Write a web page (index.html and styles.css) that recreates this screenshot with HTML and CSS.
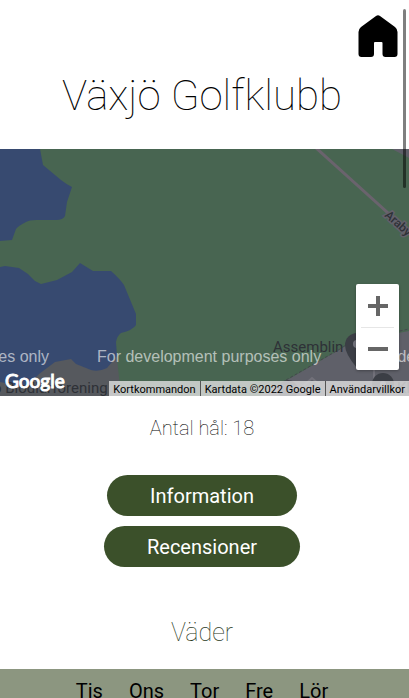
FILE: index.html
```html
<!DOCTYPE html>
<html lang="sv">
<head>
<meta charset="utf-8">
<meta name="viewport" content="width=device-width, initial-scale=1">
<title>Växjö Golfklubb</title>
<link rel="stylesheet" href="styles.css">
</head>
<body>
<div class="scroll-thumb" aria-hidden="true"></div>
<header class="top">
  <a class="home" href="#" aria-label="Hem">
    <svg viewBox="0 0 40 42" width="40" height="42" aria-hidden="true">
      <path d="M18 1Q20-.4 22 1L37 12Q39.500 14 39.500 17V39Q39.500 42 36.500 42H27.500Q24.500 42 24.500 39V28Q24.500 27 23.500 27H17Q16 27 16 28V39Q16 42 13 42H3.500Q.5 42 .5 39V17Q.5 14 3 12Z"/>
    </svg>
  </a>
</header>
<main>
  <h1 class="club">Växjö Golfklubb</h1>
  <section class="map" aria-label="Karta">
    <svg class="map-art" viewBox="0 0 409 247" preserveAspectRatio="xMidYMid slice">
      <rect width="409" height="247" fill="#486551"/>
      <path fill="#56595e" d="M0 200H116L121 247H0Z"/>
      <path fill="#374a70" d="M0 0H40L43 16L61 31Q66 35 72 38L67 53L65 67Q63 71 56 71H36Q29 71 26 73Q18 77 16 80L12 91L0 92Z"/>
      <path fill="#374a70" d="M0 118L5 117L19 119L28 125L35 132L41 135L57 131L72 123L80 114L93 122L111 122Q120 130 124 136L136 165V176Q133 181 121 184Q117 187 116 193L117 207L107 219Q99 223 91 221L76 215L71 210L55 213L39 225L27 238L0 233Z"/>
      <path fill="#5f6069" d="M260 247L344 198Q353 192 362 191L409 182V247Z"/>
      <path fill="none" stroke="#45484e" stroke-dasharray="3 2" d="M286 231L340 200Q352 191 364 190L409 180"/>
      <path fill="none" stroke="#72717a" stroke-width="2" d="M302 238L312 229L320 236M374 235V205"/>
      <path fill="none" stroke="#6a636d" stroke-width="3" d="M315-2L409 83"/>
      <path fill="#5e5e68" d="M392 0H409V9Z"/>
      <g fill="#3b3e45">
        <path d="M345 196A12 12 0 0 1 369 196Q369 204 357 219Q345 205 345 196Z"/>
        <circle cx="383" cy="235" r="11"/><circle cx="288" cy="241" r="10"/>
      </g>
      <circle cx="357" cy="195" r="4" fill="#74757e"/><circle cx="383" cy="235" r="3" fill="#74757e"/>
      <g class="places">
        <text x="273" y="203">Assemblin</text>
        <text x="-7" y="244">o Biodlarförening</text>
        <text x="397" y="244">Kl</text>
        <text class="road" transform="translate(384 67) rotate(42)">Araby sp</text>
      </g>
      <g class="watermark">
        <text x="49" y="213" text-anchor="end">For development purposes only</text>
        <text x="97" y="213">For development purposes only</text>
        <text x="369" y="213">For development purposes only</text>
      </g>
      <text class="logo" x="5" y="239">Google</text>
    </svg>
    <div class="zoom">
      <button type="button" aria-label="Zooma in"><svg viewBox="0 0 20 20" width="20" height="20"><path d="M8 0h4v8h8v4h-8v8H8v-8H0V8h8z"/></svg></button>
      <button type="button" aria-label="Zooma ut"><svg viewBox="0 0 20 20" width="20" height="20"><path d="M0 8h20v4H0z"/></svg></button>
    </div>
    <div class="legal">
      <button type="button">Kortkommandon</button>
      <span>Kartdata ©2022 Google</span>
      <a href="#">Användarvillkor</a>
    </div>
  </section>
  <p class="holes">Antal hål: 18</p>
  <div class="actions">
    <button type="button">Information</button>
    <button type="button">Recensioner</button>
  </div>
  <h2 class="weather-title">Väder</h2>
  <ul class="days">
    <li>Tis</li><li>Ons</li><li>Tor</li><li>Fre</li><li>Lör</li>
  </ul>
</main>
</body>
</html>
```
FILE: styles.css
```css
* { box-sizing: border-box; }
html { scrollbar-width: none; }
body {
  margin: 0;
  background: #fff;
  color: #000;
  font-family: Roboto, sans-serif;
}
button { border: 0; font: inherit; cursor: pointer; }
.scroll-thumb {
  position: absolute;
  z-index: 2;
  top: 9px;
  right: 3px;
  width: 3px;
  height: 179px;
  border-radius: 2px;
  background: rgba(0, 0, 0, .5);
}
.top {
  display: flex;
  justify-content: flex-end;
  padding: 15px 11px 0;
}
.home { display: flex; color: #000; }
.club, .holes, .actions, .weather-title, .days { padding-right: 5px; }
.club {
  margin: 13px 0 27px;
  font-size: 42px;
  line-height: 52px;
  font-weight: 100;
  text-align: center;
}
.map {
  position: relative;
  height: 247px;
  overflow: hidden;
}
.map-art { display: block; width: 100%; height: 100%; }
.places { font-size: 15px; fill: #2e3137; }
.road { font-size: 12px; font-weight: 500; stroke: #62606a; stroke-width: 3px; paint-order: stroke; }
.watermark { font-family: "Liberation Sans", sans-serif; font-size: 16px; fill: #fff; fill-opacity: .6; }
.logo { font-family: Lato, sans-serif; font-size: 19px; font-weight: 400; fill: #fff; stroke: #fff; stroke-width: 1px; }
.zoom {
  position: absolute;
  right: 10px;
  bottom: 26px;
  width: 43px;
  padding: 0 5px;
  border-radius: 2px;
  background: #fff;
  box-shadow: 0 1px 3px rgba(0, 0, 0, .3);
}
.zoom button {
  display: flex;
  width: 100%;
  height: 43px;
  padding: 0;
  align-items: center;
  justify-content: center;
  background: none;
}
.zoom button + button { border-top: 1px solid #e6e6e6; }
.zoom svg { fill: #666; }
.legal {
  position: absolute;
  right: 0;
  bottom: 0;
  display: flex;
  font-size: 11px;
  line-height: 13px;
}
.legal > * {
  padding: 2px 4px 0;
  background: rgba(225, 225, 225, .8);
  color: #000;
  text-decoration: none;
  white-space: nowrap;
}
.legal > * + * { border-left: 1px solid #555; }
.holes {
  margin: 20px 0 34px;
  font-size: 20px;
  line-height: 25px;
  font-weight: 100;
  text-align: center;
}
.actions {
  display: flex;
  flex-direction: column;
  align-items: center;
  gap: 10px;
}
.actions button {
  height: 41px;
  padding: 0 43px;
  border-radius: 21px;
  background: #3b502a;
  color: #fff;
  font-size: 20px;
}
.weather-title {
  margin: 50px 0 20px;
  font-size: 25px;
  line-height: 32px;
  font-weight: 100;
  text-align: center;
  color: #283719;
}
.days {
  display: flex;
  justify-content: center;
  gap: 26px;
  margin: 0;
  padding-top: 10px;
  padding-bottom: 10px;
  padding-left: 0;
  background: #8c9680;
  font-size: 20px;
  line-height: 24px;
  list-style: none;
}
```
